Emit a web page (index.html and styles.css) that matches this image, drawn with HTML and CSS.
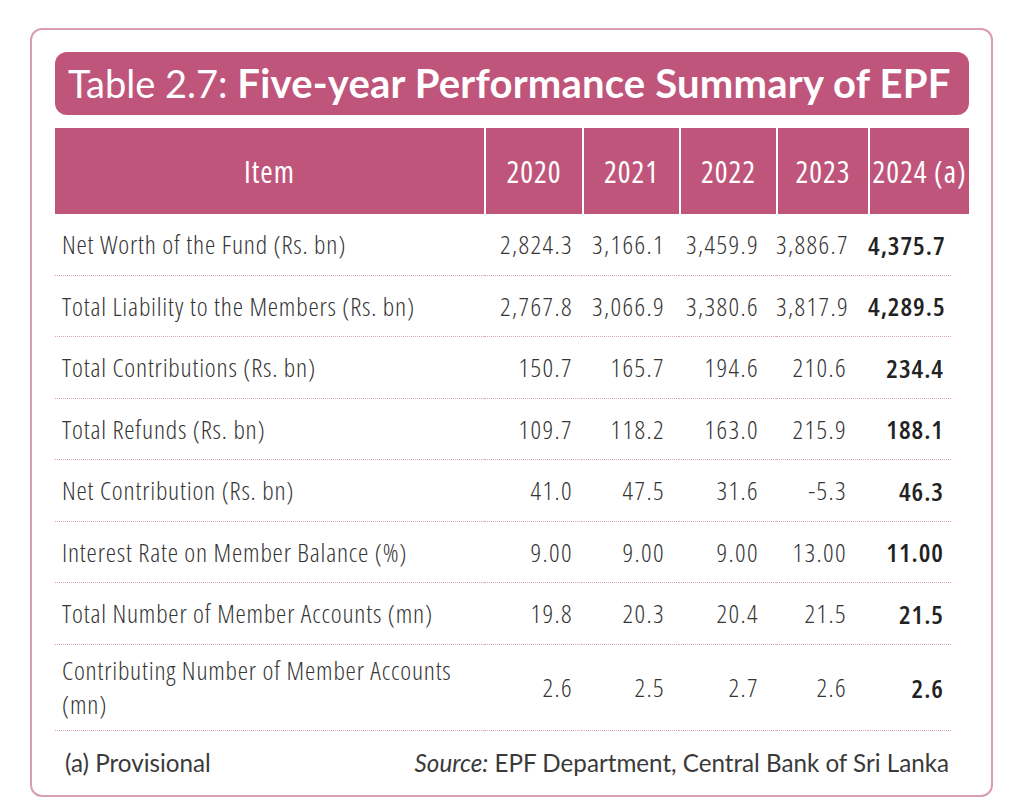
FILE: index.html
```html
<!DOCTYPE html>
<html lang="en">
<head>
<meta charset="utf-8">
<title>Table 2.7: Five-year Performance Summary of EPF</title>
<link rel="stylesheet" href="styles.css">
</head>
<body>
<div class="frame">
  <h1 class="title"><span class="lbl">Table 2.7:</span> <span class="ttl">Five-year Performance Summary of EPF</span></h1>
  <table class="summary">
    <thead>
      <tr>
        <th class="item">Item</th>
        <th>2020</th>
        <th>2021</th>
        <th>2022</th>
        <th>2023</th>
        <th>2024 <span class="a">(a)</span></th>
      </tr>
    </thead>
    <tbody>
      <tr><td class="item">Net Worth of the Fund (Rs. bn)</td><td class="c1">2,824.3</td><td class="c2">3,166.1</td><td class="c3">3,459.9</td><td class="c4">3,886.7</td><td class="c5">4,375.7</td></tr>
      <tr><td class="item">Total Liability to the Members (Rs. bn)</td><td class="c1">2,767.8</td><td class="c2">3,066.9</td><td class="c3">3,380.6</td><td class="c4">3,817.9</td><td class="c5">4,289.5</td></tr>
      <tr><td class="item">Total Contributions (Rs. bn)</td><td class="c1">150.7</td><td class="c2">165.7</td><td class="c3">194.6</td><td class="c4">210.6</td><td class="c5">234.4</td></tr>
      <tr><td class="item">Total Refunds (Rs. bn)</td><td class="c1">109.7</td><td class="c2">118.2</td><td class="c3">163.0</td><td class="c4">215.9</td><td class="c5">188.1</td></tr>
      <tr><td class="item">Net Contribution (Rs. bn)</td><td class="c1">41.0</td><td class="c2">47.5</td><td class="c3">31.6</td><td class="c4">-5.3</td><td class="c5">46.3</td></tr>
      <tr><td class="item">Interest Rate on Member Balance (%)</td><td class="c1">9.00</td><td class="c2">9.00</td><td class="c3">9.00</td><td class="c4">13.00</td><td class="c5">11.00</td></tr>
      <tr><td class="item">Total Number of Member Accounts (mn)</td><td class="c1">19.8</td><td class="c2">20.3</td><td class="c3">20.4</td><td class="c4">21.5</td><td class="c5">21.5</td></tr>
      <tr class="tall"><td class="item">Contributing Number of Member Accounts<br>(mn)</td><td class="c1">2.6</td><td class="c2">2.5</td><td class="c3">2.7</td><td class="c4">2.6</td><td class="c5">2.6</td></tr>
    </tbody>
  </table>
  <div class="foot">
    <span class="note">(a) Provisional</span>
    <span class="source"><em>Source:</em> EPF Department, Central Bank of Sri Lanka</span>
  </div>
</div>
</body>
</html>
```

FILE: styles.css
```css
html, body {
  margin: 0;
  padding: 0;
  background: #ffffff;
}

.frame {
  box-sizing: border-box;
  width: 963px;
  margin: 28px 0 0 30px;
  padding: 22px 22px 0 23px;
  border: 2px solid #d99db6;
  border-radius: 12px;
  background: #fff;
}

.title {
  box-sizing: border-box;
  margin: 0;
  width: 914px;
  height: 63px;
  padding: 0 0 0 13px;
  background: #c0557b;
  border-radius: 12px;
  color: #fff;
  font-family: "Lato", "Open Sans", sans-serif;
  font-size: 38px;
  line-height: 63px;
  font-weight: normal;
  white-space: nowrap;
}

.title .lbl {
  font-weight: 400;
}

.title .ttl {
  font-size: 40px;
  font-weight: 700;
  letter-spacing: 0.2px;
}

.summary {
  width: 914px;
  margin-top: 13px;
  border-collapse: separate;
  border-spacing: 0;
  table-layout: fixed;
  font-family: "Open Sans", "DejaVu Sans Condensed", sans-serif;
  font-stretch: 75%;
}

.summary th {
  box-sizing: border-box;
  height: 86px;
  padding: 0;
  background: #c0557b;
  color: #fff;
  font-size: 30px;
  font-weight: 400;
  letter-spacing: 1px;
  text-align: center;
  border-left: 2px solid #fff;
  white-space: nowrap;
}

.summary th.item {
  width: 429px;
  border-left: none;
}

.summary th:nth-child(2) { width: 98px; }
.summary th:nth-child(3) { width: 97px; }
.summary th:nth-child(4) { width: 97px; }
.summary th:nth-child(5) { width: 92px; }
.summary th:nth-child(6) { width: 101px; }

.summary td {
  box-sizing: border-box;
  height: 61.5px;
  padding: 0;
  color: #353535;
  font-size: 26px;
  font-weight: 300;
  letter-spacing: 1.4px;
  text-align: right;
  vertical-align: middle;
  border-bottom: 1px dotted #dfa7bf;
  white-space: nowrap;
}

.summary td.item {
  padding-left: 7px;
  letter-spacing: 0.8px;
  text-align: left;
}

.summary td.c1 { padding-right: 9px; }
.summary td.c2 { padding-right: 14px; }
.summary td.c3 { padding-right: 17px; }
.summary td.c4 { padding-right: 21px; }

.summary td.c5 {
  padding-right: 25px;
  color: #222;
  font-weight: 600;
  letter-spacing: 1px;
  border-bottom: none;
  background:
    linear-gradient(#fff, #fff) right bottom / 17px 1px no-repeat,
    linear-gradient(to right, #dfa7bf 50%, transparent 50%) left bottom / 2px 1px repeat-x;
}

.summary tr.tall td {
  height: 86px;
  line-height: 34px;
}

.foot {
  display: flex;
  justify-content: space-between;
  align-items: center;
  width: 914px;
  height: 64px;
  padding: 0 20px 0 10px;
  box-sizing: border-box;
  font-family: "Lato", "Open Sans", sans-serif;
  font-size: 24.2px;
  color: #3a3a3a;
}

.foot em {
  font-style: italic;
}
```
